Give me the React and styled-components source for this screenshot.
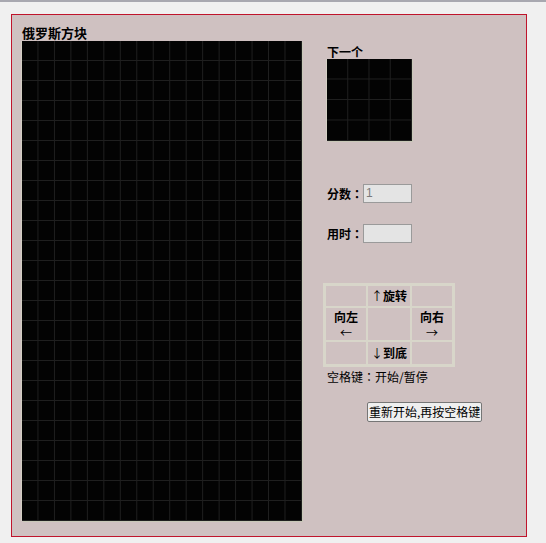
import React from 'react';
import styled, {createGlobalStyle} from 'styled-components';

const Global = createGlobalStyle`
    html, body {
        margin: 0;
        padding: 0;
        background-color: #f0f0f0;
    }
    body {
        border-top: 2px solid #a8a8b0;
        font-family: "Liberation Sans", "Noto Sans CJK SC", sans-serif;
        color: #000;
    }
`;

const Frame = styled.div`
    box-sizing: border-box;
    margin: 12px 0 0 11px;
    width: 516px;
    height: 523px;
    border: 1px solid #c0142c;
    background-color: #cfc1c1;
    display: flex;
    padding: 10px 0 0 10px;
`;

const LeftCol = styled.div`
    display: flex;
    flex-direction: column;
`;

const Title = styled.div`
    font-family: "Noto Sans CJK SC", sans-serif;
    font-size: 13px;
    font-weight: bold;
    line-height: 18px;
    height: 17px;
    margin-top: -1px;
`;

const Board = styled.div`
    width: 280px;
    height: 480px;
    background-color: #030303;
    background-image:
        linear-gradient(to right, #1f1f1f 1px, transparent 1px),
        linear-gradient(to bottom, #1f1f1f 1px, transparent 1px);
    background-size: ${p => p.$cw}px ${p => p.$ch}px;
    background-position: ${p => p.$cw - 1}px ${p => p.$ch - 1}px;
    box-shadow: 1px 1px 0 #c8c8b8, -1px 0 0 #d4d0c4;
`;

const RightCol = styled.div`
    display: flex;
    flex-direction: column;
    margin-left: 25px;
    padding-top: 19px;
`;

const Label = styled.div`
    font-family: "Noto Sans CJK SC", sans-serif;
    font-size: 12px;
    font-weight: bold;
    line-height: 15px;
`;

const Preview = styled(Board)`
    width: 85px;
    height: 82px;
`;

const Field = styled.div`
    display: flex;
    align-items: center;
    margin-top: ${p => p.$top}px;
    height: 19px;
`;

const FieldLabel = styled.span`
    font-family: "Noto Sans CJK SC", sans-serif;
    font-size: 12px;
    font-weight: bold;
    width: 36px;
    flex-shrink: 0;
    white-space: nowrap;
`;

const Colon = styled.span`
    font-family: "Noto Sans CJK JP", sans-serif;
`;

const Box = styled.div`
    box-sizing: border-box;
    width: 49px;
    height: 19px;
    border: 1px solid #9a9a9a;
    background-color: #e4e4e4;
    color: #7a7a7a;
    font-size: 12px;
    line-height: 17px;
    padding-left: 2px;
`;

const Keys = styled.div`
    margin-top: 40px;
    margin-left: -4px;
    display: grid;
    grid-template-columns: 42px 44px 42px;
    grid-template-rows: 22px 34px 24px;
    border: 2px solid #d8d6ca;
    width: 128px;
`;

const Cell = styled.div`
    display: flex;
    flex-direction: column;
    align-items: center;
    justify-content: center;
    border: 1px solid #d8d6ca;
    font-family: "Noto Sans CJK SC", sans-serif;
    font-size: 12px;
    font-weight: bold;
    line-height: 16px;
    white-space: nowrap;
    grid-column: ${p => p.$col};
    grid-row: ${p => p.$row};
`;

const Arrow = styled.span`
    font-weight: normal;
    font-family: "Noto Sans CJK SC", sans-serif;
    font-variant-emoji: text;
    font-size: 12px;
    line-height: 15px;
    color: #000;
`;

const Hint = styled.div`
    font-family: "Noto Sans CJK SC", sans-serif;
    font-size: 12px;
    margin-top: 2px;
    line-height: 16px;
`;

const Restart = styled.button`
    margin: 17px 0 0 40px;
    align-self: flex-start;
    height: 20px;
    padding: 0 1px;
    border: 1px solid #767676;
    border-radius: 2px;
    background-color: #efefef;
    font-family: "Noto Sans CJK SC", sans-serif;
    font-size: 12px;
    line-height: 16px;
    color: #000;
`;

export default function App() {
    return (
        <>
            <Global />
            <Frame>
                <LeftCol>
                    <Title>俄罗斯方块</Title>
                    <Board $cw={280 / 17} $ch={20} />
                </LeftCol>
                <RightCol>
                    <Label>下一个</Label>
                    <Preview $cw={21.25} $ch={20.5} />
                    <Field $top={43}>
                        <FieldLabel>分数<Colon>：</Colon></FieldLabel>
                        <Box>1</Box>
                    </Field>
                    <Field $top={21}>
                        <FieldLabel>用时<Colon>：</Colon></FieldLabel>
                        <Box />
                    </Field>
                    <Keys>
                        <Cell $col="2" $row="1"><span><Arrow>↑</Arrow>旋转</span></Cell>
                        <Cell $col="1" $row="1" />
                        <Cell $col="3" $row="1" />
                        <Cell $col="1" $row="2"><span>向左</span><Arrow>←</Arrow></Cell>
                        <Cell $col="2" $row="2" />
                        <Cell $col="3" $row="2"><span>向右</span><Arrow>→</Arrow></Cell>
                        <Cell $col="1" $row="3" />
                        <Cell $col="2" $row="3"><span><Arrow>↓</Arrow>到底</span></Cell>
                        <Cell $col="3" $row="3" />
                    </Keys>
                    <Hint>空格键<Colon>：</Colon>开始/暂停</Hint>
                    <Restart>重新开始,再按空格键</Restart>
                </RightCol>
            </Frame>
        </>
    );
}
